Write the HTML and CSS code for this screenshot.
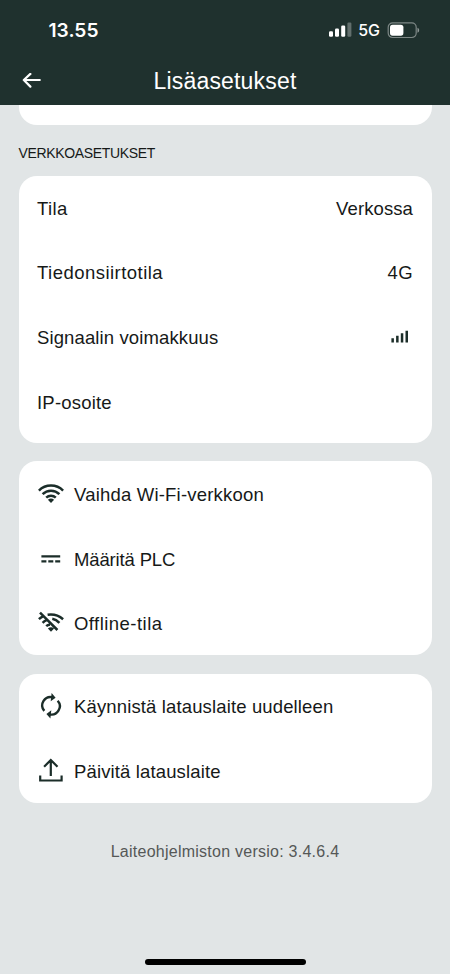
FILE: index.html
```
<!DOCTYPE html>
<html lang="fi">
<head>
<meta charset="utf-8">
<meta name="viewport" content="width=device-width, initial-scale=1">
<title>Lisäasetukset</title>
<link rel="stylesheet" href="styles.css">
</head>
<body>
<div class="screen">
  <header class="header">
    <div class="status">
      <span class="clock">13.55</span>
      <div class="status-icons">
        <svg class="cell" width="24" height="16" viewBox="0 0 24 16" fill="#fff"><rect x="1" y="9.2" width="4" height="5.6" rx="1.2"/><rect x="7" y="6.6" width="4" height="8.2" rx="1.2"/><rect x="13.2" y="3.6" width="4" height="11.2" rx="1.2"/><rect x="19.4" y="0.6" width="4" height="14.2" rx="1.2" opacity=".3"/></svg>
        <span class="network">5G</span>
        <svg class="battery" width="33" height="17" viewBox="0 0 33 17"><rect x="1.2" y="0.9" width="28" height="14.6" rx="4.4" fill="none" stroke="#fff" stroke-opacity=".42" stroke-width="1.2"/><rect x="3" y="2.7" width="13.4" height="11" rx="2.6" fill="#fff"/><path d="M30.500 5.700c2.200.8 2.200 4.200 0 5z" fill="#fff" fill-opacity=".5"/></svg>
      </div>
    </div>
    <div class="nav">
      <svg class="back" width="20" height="16" viewBox="0 0 20 16" fill="none" stroke="#fff" stroke-width="2.2" stroke-linecap="round" stroke-linejoin="round"><path d="M1.8 7H17.800M8.400 .9 1.800 7l6.600 6.600"/></svg>
      <h1 class="title">Lisäasetukset</h1>
    </div>
  </header>
  <main class="content">
    <div class="card card-end"></div>
    <h2 class="section">VERKKOASETUKSET</h2>
    <section class="card card-info">
      <div class="row"><span class="t-tila">Tila</span><span class="value t-verkossa">Verkossa</span></div>
      <div class="row"><span class="t-tiedon">Tiedonsiirtotila</span><span class="value t-4g">4G</span></div>
      <div class="row"><span class="t-signaali">Signaalin voimakkuus</span><svg class="signal" width="18" height="15" viewBox="0 0 18 15" fill="#1b2d29"><path d="M.4 8.200h2.500v4.300H.4zM5.100 5.700h2.500v6.800H5.100zM9.800 3.200h2.500v9.300H9.800zM14.500 .8h2.500v11.700h-2.500z"/></svg></div>
      <div class="row"><span class="t-ip">IP-osoite</span></div>
    </section>
    <section class="card card-actions">
      <div class="row"><svg class="icon" width="28" height="28" viewBox="0 0 28 28" fill="none" stroke="#1b2d29" stroke-width="2.500"><path d="M1.900 9.600a17.200 17.200 0 0 1 24.200 0M5.600 13.200a12 12 0 0 1 16.800 0M9.200 16.700a7 7 0 0 1 9.600 0"/><path d="M10.900 18.700a4.800 4.800 0 0 1 6.200 0L14 21.900z" fill="#1b2d29" stroke="none"/></svg><span class="t-wifi">Vaihda Wi-Fi-verkkoon</span></div>
      <div class="row"><svg class="icon" width="28" height="28" viewBox="0 0 28 28" fill="#1b2d29"><path d="M4.400 9.200h18.800v2.400H4.400zM4.400 14.200h5v2.300h-5zM11.300 14.200h5v2.300h-5zM18.200 14.200h5v2.300h-5z"/></svg><span class="t-plc">Määritä PLC</span></div>
      <div class="row"><svg class="icon" width="28" height="28" viewBox="0 0 28 28" fill="none" stroke="#1b2d29" stroke-width="2.500"><path d="M3 2.600 20.400 20M1.900 9.200q1.700-1.600 3.900-2.800M5.600 12.800q1.700-1.700 3.900-2.600M9.200 16.200q1.600-1.500 3.800-1.800M10.600 4.700Q19.400 3.300 26.100 9.200M15.300 8.800q4 .8 7.100 4"/><path d="M10.900 18.500a4.800 4.800 0 0 1 6.200 0L14 21.700z" fill="#1b2d29" stroke="none"/></svg><span class="t-offline">Offline-tila</span></div>
    </section>
    <section class="card card-actions">
      <div class="row"><svg class="icon" width="28" height="28" viewBox="0 0 28 28" fill="none" stroke="#1b2d29" stroke-width="2.400"><path d="M7.300 17.900A8.400 8.400 0 0 1 15.800 4.300M20.700 7.700A8.400 8.400 0 0 1 12.200 21.300"/><path d="M14.600 0 18.600 4.700 13.700 8.300zM13.400 25.600 9.400 20.900 14.300 17.300z" fill="#1b2d29" stroke="none"/></svg><span class="t-restart">Käynnistä latauslaite uudelleen</span></div>
      <div class="row"><svg class="icon" width="28" height="28" viewBox="0 0 28 28" fill="none" stroke="#1b2d29" stroke-width="2.200"><path d="M13.800 18V2M7.100 8.700l6.700-6.700 6.700 6.700M3.200 17.500v5h21.400v-5"/></svg><span class="t-update">Päivitä latauslaite</span></div>
    </section>
    <p class="version">Laiteohjelmiston versio: 3.4.6.4</p>
  </main>
  <div class="home-bar"></div>
</div>
</body>
</html>
```
FILE: styles.css
```
* { box-sizing: border-box; }
body { margin: 0; font-family: "Liberation Sans", Arial, sans-serif; color: #161918; }
.screen { width: 450px; height: 974px; background: #e1e5e6; display: flex; flex-direction: column; overflow: hidden; }
.header { height: 105px; background: #1f312e; color: #fff; flex: none; }
.status { height: 60px; padding: 0 30px 0 48.500px; display: flex; align-items: center; justify-content: space-between; }
.clock { font: 600 19.200px/24px Inter, sans-serif; }
.status-icons { display: flex; align-items: center; }
.network { font: 500 16px/20px Inter, sans-serif; margin: 0 7px 0 6px; }
.nav { height: 42px; display: grid; grid-template-columns: 42px 1fr 42px; align-items: center; }
.back { margin-left: 22px; }
.title { margin: 0; text-align: center; font-size: 23px; line-height: 30px; font-weight: 400; letter-spacing: .18px; }
.content { flex: 1; padding: 0 18.500px; }
.card { background: #fff; border-radius: 18px; margin-bottom: 18.500px; }
.card-end { height: 19.500px; border-radius: 0 0 18px 18px; }
.section { margin: 0 0 12.500px; font-size: 14px; line-height: 20px; font-weight: 400; letter-spacing: -.35px; }
.card-info { padding: 1px 0 8px; }
.row { height: 64.600px; padding: 0 18.500px; display: flex; align-items: center; font-size: 18.500px; line-height: 24px; letter-spacing: .4px; white-space: nowrap; }
.card-actions .row { padding-top: 2.500px; }
.value { margin-left: auto; }
.t-verkossa { letter-spacing: .1px; }
.t-tiedon { letter-spacing: .47px; }
.t-signaali { letter-spacing: .12px; }
.t-ip { letter-spacing: .2px; }
.t-wifi { letter-spacing: .2px; }
.t-plc { letter-spacing: -.15px; }
.t-offline { letter-spacing: .46px; }
.t-restart, .t-update { letter-spacing: .14px; }
.signal { margin: 0 4px 0 auto; }
.icon { margin: 0 9px 0 0; flex: none; }
.version { margin: 38px 0 0; text-align: center; font-size: 16px; line-height: 22px; letter-spacing: .25px; color: #555857; }
.home-bar { width: 161px; height: 6px; border-radius: 3px; background: #000; margin: 0 auto 9px; flex: none; }
```
